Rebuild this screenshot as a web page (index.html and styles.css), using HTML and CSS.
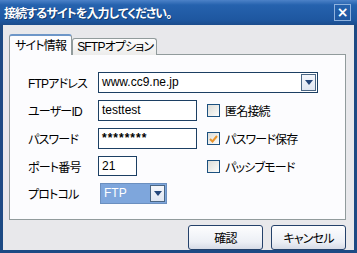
FILE: index.html
```html
<!doctype html>
<html>
    <head>
        <title>接続するサイトを入力してください。</title>
        <link rel="stylesheet" href="styles.css">
    </head>
    <body>
        <div class="window">
            <div class="titlebar">
                <span class="title">接続するサイトを入力してください。</span>
                <span class="close-btn">&times;</span>
            </div>

            <div class="client">
                <!-- Tabs -->
                <div class="tabs">
                    <div class="tab active">サイト情報</div>
                    <div class="tab">SFTPオプション</div>
                </div>

                <div class="panel">
                    <div class="form">
                        <label class="label">FTPアドレス</label>
                        <div class="combo wide">
                            <span class="combo-text">www.cc9.ne.jp</span>
                            <span class="drop-btn"><span class="arrow"></span></span>
                        </div>

                        <label class="label">ユーザーID</label>
                        <div class="textbox">testtest</div>
                        <div class="check"><span class="box"></span>匿名接続</div>

                        <label class="label">パスワード</label>
                        <div class="textbox secret">********</div>
                        <div class="check"><span class="box checked">
                            <svg width="9" height="8" viewBox="0 0 9 8"><path d="M1 4 L3.5 6.5 L8 1" fill="none" stroke="#e9942c" stroke-width="2"/></svg>
                        </span>パスワード保存</div>

                        <label class="label">ポート番号</label>
                        <div class="textbox port">21</div>
                        <div class="check"><span class="box"></span>パッシブモード</div>

                        <label class="label">プロトコル</label>
                        <div class="combo protocol">
                            <span class="combo-text selected">FTP</span>
                            <span class="drop-btn"><span class="arrow"></span></span>
                        </div>
                    </div>
                </div>

                <!-- Buttons -->
                <div class="buttons">
                    <button class="btn">確認</button>
                    <button class="btn">キャンセル</button>
                </div>
            </div>
        </div>
    </body>
</html>
```

FILE: styles.css
```css
body {
    margin: 0;
    font-family: "Liberation Sans", "Noto Sans CJK JP", sans-serif;
    font-size: 12px;
    font-feature-settings: "palt";
    letter-spacing: -0.8px;
    color: #000;
}

.window {
    width: 357px;
    height: 253px;
    box-sizing: border-box;
    display: flex;
    flex-direction: column;
    background-color: #1d4a84;
    padding: 0 3px 3px 3px;
}

.titlebar {
    height: 25px;
    margin: 0 -3px;
    padding: 0 6px 0 4px;
    display: flex;
    align-items: center;
    justify-content: space-between;
    background: linear-gradient(#4c82c8, #2562ae 20%, #1e57a0 80%, #1b4c8c);
}

.title {
    color: #fff;
    font-weight: bold;
    font-size: 12px;
    letter-spacing: -0.9px;
    text-shadow: 1px 1px 0 #123c70;
}

.close-btn {
    width: 15px;
    height: 15px;
    border: 1px solid #8fb2de;
    color: #fff;
    font-family: "DejaVu Sans", sans-serif;
    font-weight: bold;
    font-size: 14px;
    letter-spacing: 0;
    line-height: 15px;
    text-align: center;
}

.client {
    flex: 1;
    display: flex;
    flex-direction: column;
    background-color: #e8e8eb;
    padding: 10px 8px 0 6px;
}

.tabs {
    display: flex;
    align-items: flex-end;
    height: 20px;
    position: relative;
    z-index: 1;
    margin-bottom: -1px;
}

.tab {
    height: 16px;
    line-height: 16px;
    padding: 0 3px 0 4px;
    border: 1px solid #919b9c;
    border-bottom: none;
    border-radius: 3px 3px 0 0;
    background: linear-gradient(#fdfdfd, #ececeb);
}

.tab.active {
    height: 19px;
    line-height: 20px;
    padding: 0 5px;
    background: #fcfcfe;
    border-top: 2px solid #6d96c8;
    border-color: #6d96c8 #919b9c #fcfcfe;
}

.panel {
    height: 166px;
    box-sizing: border-box;
    background-color: #fcfcfe;
    border: 1px solid #919b9c;
    padding: 17px 0 0 18px;
}

.form {
    display: grid;
    grid-template-columns: 70px 108px auto;
    grid-template-rows: 21px 21px 21px 20px 21px;
    row-gap: 7px;
    align-items: center;
}

.label {
    white-space: nowrap;
}

.textbox,
.combo {
    box-sizing: border-box;
    height: 21px;
    border: 1px solid #1c3f63;
    background-color: #fff;
    padding: 0 3px;
    line-height: 19px;
    letter-spacing: 0;
}

.textbox {
    width: 99px;
}

.textbox.secret {
    font-weight: bold;
    letter-spacing: 1px;
}

.textbox.port {
    width: 39px;
    height: 20px;
    line-height: 18px;
}

.combo {
    display: flex;
    justify-content: space-between;
    align-items: center;
    padding: 0 1px 0 3px;
}

.combo.wide {
    grid-column: span 2;
    width: 220px;
}

.combo.protocol {
    width: 67px;
    background-color: #7ea6dc;
    border-color: #6b8fbf;
    margin-left: 2px;
}

.combo-text.selected {
    color: #fff;
}

.drop-btn {
    width: 15px;
    height: 17px;
    box-sizing: border-box;
    border: 1px solid #4a6684;
    background: linear-gradient(#f4f6fb, #dfe6f2);
    display: flex;
    align-items: center;
    justify-content: center;
}

.arrow {
    width: 0;
    height: 0;
    border-left: 4px solid transparent;
    border-right: 4px solid transparent;
    border-top: 5px solid #24467a;
}

.check {
    display: flex;
    align-items: center;
    gap: 5px;
    white-space: nowrap;
    padding-left: 1px;
}

.box {
    width: 13px;
    height: 13px;
    box-sizing: border-box;
    border: 1px solid #1c5180;
    background: linear-gradient(135deg, #dcdcd7, #fdfdfc);
    display: flex;
    align-items: center;
    justify-content: center;
}

.buttons {
    display: flex;
    justify-content: flex-end;
    gap: 8px;
    padding-top: 5px;
}

.btn {
    width: 75px;
    height: 25px;
    border: 1px solid #24416a;
    border-radius: 3px;
    background: linear-gradient(#fdfdfe, #eceff5 70%, #d6dbe6);
    font-family: "Liberation Sans", "Noto Sans CJK JP", sans-serif;
    font-size: 12px;
    font-feature-settings: "palt";
    letter-spacing: -0.8px;
    padding: 0;
}
```
